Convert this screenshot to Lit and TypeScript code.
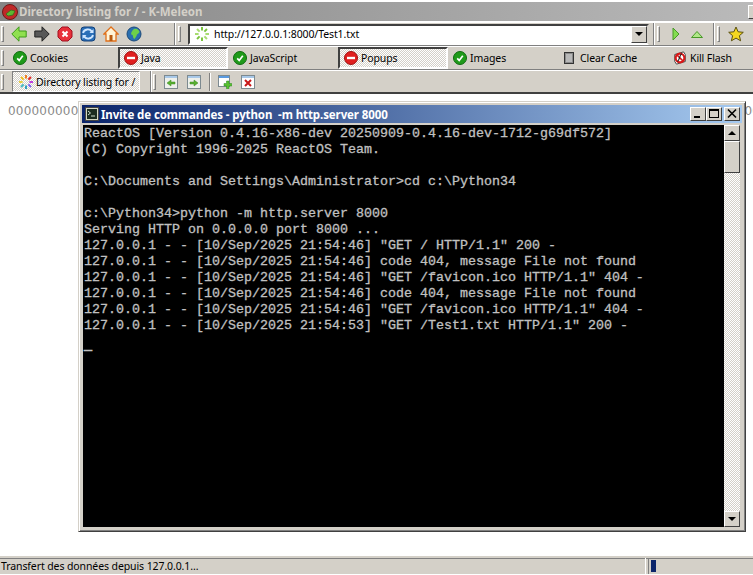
import { LitElement, html, css, svg } from "lit";
import { customElement } from "lit/decorators.js";

const check = svg`<svg class="i14" viewBox="0 0 14 14"><circle cx="7" cy="7" r="6.5" fill="#1f9a1a" stroke="#0f6a10"/><path d="M4.2 7.4l2 2 3.6-4.6" fill="none" stroke="#fff" stroke-width="1.7"/></svg>`;
const block = svg`<svg class="i14" viewBox="0 0 14 14"><circle cx="7" cy="7" r="6.5" fill="#e01f1f" stroke="#a01010"/><rect x="3" y="5.8" width="8" height="2.4" fill="#fff"/></svg>`;
const ticks = (cols: string[]) => cols.map((c, i) => {
  const a = (i * Math.PI) / 4 - Math.PI / 2;
  const x1 = 8 + Math.cos(a) * 3.4, y1 = 8 + Math.sin(a) * 3.4, x2 = 8 + Math.cos(a) * 7, y2 = 8 + Math.sin(a) * 7;
  return svg`<line x1=${x1} y1=${y1} x2=${x2} y2=${y2} stroke=${c} stroke-width="2"/>`;
});

const back = svg`<svg class="i16" viewBox="0 0 16 16"><path d="M.8 8L8 .8v4.200h7.200v6H8v4.200z" fill="#90e050" stroke="#3e9a1c"/></svg>`;
const fwd = svg`<svg class="i16" viewBox="0 0 16 16"><path d="M15.200 8L8 .8v4.200H.8v6H8v4.200z" fill="#585858" stroke="#222"/></svg>`;
const stop = svg`<svg class="i16" viewBox="0 0 16 16"><path d="M5 1h6l4 4v6l-4 4H5l-4-4V5z" fill="#e8303a" stroke="#a01020"/><path d="M5.500 5.500l5 5m0-5l-5 5" stroke="#fff" stroke-width="2"/></svg>`;
const reload = svg`<svg class="i16" viewBox="0 0 16 16"><rect x="1" y="1" width="14" height="14" rx="3" fill="#2a6fb8" stroke="#12417a"/><path d="M3 7c1-4 7-5 9-1M13 9c-1 4-7 5-9 1" fill="none" stroke="#cfe6ff" stroke-width="1.800"/><path d="M13.500 3v4h-4zM2.500 13V9h4z" fill="#cfe6ff"/></svg>`;
const home = svg`<svg class="i16" viewBox="0 0 16 16"><path d="M8 1L1 8h2v7h10V8h2z" fill="#fff4d8" stroke="#e0701a" stroke-width="1.300"/><rect x="6.500" y="9" width="3" height="6" fill="#b85a10"/></svg>`;
const globe = svg`<svg class="i16" viewBox="0 0 16 16"><circle cx="8" cy="8" r="7" fill="#2a6fb0" stroke="#1b4a7a"/><path d="M8 3c3-1 5 1 5.500 3-1 2-3 2-3 4l-2 3c-2-1-1-3-2-4-2 0-2-3 1.500-6z" fill="#6ed04a"/></svg>`;
const tabBack = svg`<svg class="i14" viewBox="0 0 14 14"><rect x=".5" y=".5" width="13" height="13" fill="#eef0ec" stroke="#7d8a90"/><rect x="1" y="1" width="12" height="2" fill="#a8c8e8"/><path d="M3 8l4-3v2h4v2H7v2z" fill="#58b030" stroke="#3a8a20" stroke-width=".5"/></svg>`;
const tabFwd = svg`<svg class="i14" viewBox="0 0 14 14"><rect x=".5" y=".5" width="13" height="13" fill="#eef0ec" stroke="#7d8a90"/><rect x="1" y="1" width="12" height="2" fill="#a8c8e8"/><path d="M11 8L7 5v2H3v2h4v2z" fill="#58b030" stroke="#3a8a20" stroke-width=".5"/></svg>`;
const tabNew = svg`<svg class="i14" viewBox="0 0 14 14"><rect x=".5" y=".5" width="11" height="11" fill="#fff" stroke="#7d8a90"/><rect x="1" y="1" width="10" height="2" fill="#5a9ae0"/><path d="M8.500 6v2.500H6V11h2.500v2.800H11V11h2.800V8.500H11V6z" fill="#58c030" stroke="#2a8a20" stroke-width=".5"/></svg>`;
const tabClose = svg`<svg class="i14" viewBox="0 0 14 14"><rect x=".5" y=".5" width="13" height="13" fill="#fff" stroke="#7d8a90"/><rect x="1" y="1" width="12" height="2" fill="#a8c8e8"/><path d="M4 5l6 6m0-6l-6 6" stroke="#c81818" stroke-width="2"/></svg>`;
const cache = svg`<svg class="i14" viewBox="0 0 14 14"><rect x="1.500" y="1.500" width="9" height="11" fill="#8a8a8a" stroke="#333"/><rect x="3" y="3" width="6" height="8" fill="#b8b8b8"/></svg>`;
const flash = svg`<svg class="i14" viewBox="0 0 16 16"><path d="M2 4l10-3 2 3v8l-10 3-2-3z" fill="#fff" stroke="#333"/><circle cx="8" cy="8" r="5" fill="none" stroke="#d81818" stroke-width="2.500"/><path d="M4 4l8 8" stroke="#d81818" stroke-width="2"/><path d="M10 3C7 5 8 10 5 12" stroke="#222" fill="none" stroke-width="1.300"/></svg>`;
const star = svg`<svg class="i16" viewBox="0 0 16 16"><path d="M8 1l2.100 4.800 5.200.5-3.900 3.400 1.200 5.100L8 12.100l-4.600 2.700 1.200-5.100L.7 6.300l5.200-.5z" fill="#f5d820" stroke="#5a5010"/></svg>`;
const logo = svg`<svg class="i16" viewBox="0 0 16 16"><circle cx="8" cy="8" r="7.500" fill="#c02828" stroke="#701818"/><path d="M4 10l5-4 4 1-2 4-5 1z" fill="#5cb830" stroke="#2a6a18" stroke-width=".7"/></svg>`;
const cmd = svg`<svg class="i14" viewBox="0 0 14 14"><rect x=".5" y=".5" width="13" height="13" fill="#d4d8c4" stroke="#444"/><rect x="2" y="2" width="10" height="10" fill="#1c2c20"/><path d="M3 4l2.500 2L3 8" fill="none" stroke="#d0e0d0"/><path d="M6 9h4" stroke="#d0e0d0"/></svg>`;

const LOG = [
  "ReactOS [Version 0.4.16-x86-dev 20250909-0.4.16-dev-1712-g69df572]",
  "(C) Copyright 1996-2025 ReactOS Team.",
  "",
  "C:\\Documents and Settings\\Administrator>cd c:\\Python34",
  "",
  "c:\\Python34>python -m http.server 8000",
  "Serving HTTP on 0.0.0.0 port 8000 ...",
  '127.0.0.1 - - [10/Sep/2025 21:54:46] "GET / HTTP/1.1" 200 -',
  "127.0.0.1 - - [10/Sep/2025 21:54:46] code 404, message File not found",
  '127.0.0.1 - - [10/Sep/2025 21:54:46] "GET /favicon.ico HTTP/1.1" 404 -',
  "127.0.0.1 - - [10/Sep/2025 21:54:46] code 404, message File not found",
  '127.0.0.1 - - [10/Sep/2025 21:54:46] "GET /favicon.ico HTTP/1.1" 404 -',
  '127.0.0.1 - - [10/Sep/2025 21:54:53] "GET /Test1.txt HTTP/1.1" 200 -',
  "",
].join("\n");

const TOGGLES = [
  { label: "Cookies", icon: check },
  { label: "Java", icon: block, on: true },
  { label: "JavaScript", icon: check },
  { label: "Popups", icon: block, on: true },
  { label: "Images", icon: check },
  { label: "Clear Cache", icon: cache },
  { label: "Kill Flash", icon: flash },
];

@customElement("app-root")
export class AppRoot extends LitElement {
  static styles = css`
    :host {
      display: flex; flex-direction: column; position: relative;
      width: 753px; height: 575px; overflow: hidden; background: #fff;
      font: 10.5px "Noto Sans", sans-serif; letter-spacing: -0.1px; color: #000;
    }
    svg { display: block; flex: none; }
    .i14 { width: 14px; height: 14px; }
    .i16 { width: 16px; height: 16px; }
    .titlebar {
      height: 19px; flex: none; margin-top: 2px; padding-left: 2px;
      display: flex; align-items: center; gap: 1px; overflow: hidden;
      background: linear-gradient(90deg, #858585, #bababa);
      border-bottom: 1px solid #fff;
      font-weight: 700; color: #d4d0c8; font-size: 11.5px; letter-spacing: 0;
    }
    .titlebar .t { flex: 1; }
    .edgebtn { width: 16px; height: 14px; margin-right: -11px; background: #d4d0c8; border: 1px solid; border-color: #fff #404040 #404040 #fff; box-sizing: border-box; }
    .row {
      flex: none; display: flex; align-items: center; background: #d4d0c8;
      border-top: 1px solid #fff; border-bottom: 1px solid #808080; box-sizing: border-box;
    }
    .r1 { height: 24px; }
    .r2 { height: 24px; }
    .r3 { height: 24px; border-bottom: 2px solid #404040; }
    .grip { width: 3px; height: 16px; flex: none; margin-left: 1px; background: #d4d0c8; border: 1px solid; border-color: #fff #808080 #808080 #fff; box-sizing: border-box; }
    .vsep { width: 2px; align-self: stretch; flex: none; background: linear-gradient(90deg, #808080 50%, #fff 50%); }
    .nav { display: flex; gap: 7px; width: 156px; padding-left: 7px; box-sizing: border-box; align-items: center; }
    .urlwrap { width: 461px; height: 21px; margin-left: 7px; box-sizing: border-box; border: 2px solid; border-color: #404040 #d4d0c8 #fff #404040; background: #fff; display: flex; align-items: center; padding-left: 4px; gap: 4px; }
    .url { flex: 1; }
    .drop { width: 16px; height: 17px; background: #d4d0c8; border: 1px solid; border-color: #fff #404040 #404040 #fff; box-sizing: border-box; display: flex; align-items: center; justify-content: center; }
    .drop::after, .sb-down::after { content: ""; border: 4px solid transparent; border-top: 4px solid #000; border-bottom: 0; }
    .sb-up::after { content: ""; border: 4px solid transparent; border-bottom: 4px solid #000; border-top: 0; }
    .spacer { flex: 1; }
    .toggles { display: grid; grid-template-columns: repeat(6, 110px) 85px; margin-left: 4px; align-self: stretch; }
    .tg { display: flex; align-items: center; gap: 3px; padding-left: 5px; box-sizing: border-box; }
    .tg.on { border: 2px solid; border-color: #404040 #fff #fff #404040; padding-left: 4px; background: repeating-conic-gradient(#fff 0 25%, #d4d0c8 0 50%) 0 0 / 2px 2px; }
    .tabbtn { width: 128px; height: 21px; margin-left: 8px; box-sizing: border-box; border: 1px solid; border-color: #808080 #fff #fff #808080; background: repeating-conic-gradient(#fff 0 25%, #d4d0c8 0 50%) 0 0 / 2px 2px; display: flex; align-items: center; padding-left: 5px; gap: 2px; white-space: nowrap; }
    .tabtools { display: flex; align-items: center; margin-left: 8px; }
    .content { flex: 1; position: relative; padding: 10px 0 0 8px; overflow: hidden; white-space: nowrap; font: 12px "DejaVu Sans", sans-serif; color: #8a8a8a; letter-spacing: .2px; line-height: 14px; }
    .status { flex: none; height: 19px; box-sizing: border-box; display: flex; background: #d4d0c8; border-top: 2px solid #d4d0c8; border-bottom: 1px solid #fff; box-shadow: inset 0 1px #808080; }
    .status .s1 { width: 646px; padding-left: 1px; box-sizing: border-box; line-height: 17px; border-right: 1px solid #fff; }
    .status .s2 { flex: 1; margin-left: 2px; padding: 2px 0 0 2px; border-left: 1px solid #808080; }
    .prog { width: 5px; height: 12px; background: #0a246a; }
    .win { position: absolute; left: 78px; top: 101px; width: 668px; height: 431px; box-sizing: border-box; background: #d4d0c8; border: 1px solid; border-color: #d4d0c8 #404040 #404040 #d4d0c8; box-shadow: inset 1px 1px #fff, inset -1px -1px #808080; padding: 3px 3px 4px 3px; display: flex; flex-direction: column; }
    .wtitle { height: 18px; flex: none; display: flex; align-items: center; padding: 0 2px 0 3px; gap: 2px; background: linear-gradient(90deg, #0a246a, #a6caf0); color: #fff; font-weight: 700; font-size: 11.5px; letter-spacing: -0.1px; white-space: pre; }
    .wtitle .t { flex: 1; }
    .wb { width: 16px; height: 14px; background: #d4d0c8; box-sizing: border-box; border: 1px solid; border-color: #fff #404040 #404040 #fff; display: flex; align-items: center; justify-content: center; }
    .wb svg { width: 14px; height: 12px; }
    .wb.last { margin-left: 2px; }
    .wbody { flex: 1; display: flex; margin-top: 2px; min-height: 0; }
    .term { flex: 1; background: #000; margin-left: 1px; padding: 1px 0 0 1px; color: #c0c0c0; font: 13.33px/16px "Liberation Mono", monospace; letter-spacing: 0; white-space: pre; overflow: hidden; -webkit-text-stroke: .3px #c0c0c0; }
    .cur { font-weight: 700; vertical-align: -4px; line-height: 0; -webkit-text-stroke: .8px #c0c0c0; }
    .sb { width: 16px; flex: none; margin-right: 2px; display: flex; flex-direction: column; background: repeating-conic-gradient(#fff 0 25%, #d4d0c8 0 50%) 0 0 / 2px 2px; }
    .sbb { height: 16px; flex: none; background: #d4d0c8; border: 1px solid; border-color: #fff #404040 #404040 #fff; box-sizing: border-box; display: flex; align-items: center; justify-content: center; }
    .thumb { height: 32px; flex: none; background: #d4d0c8; border: 1px solid; border-color: #fff #404040 #404040 #fff; box-sizing: border-box; }
  `;

  render() {
    return html`
      <div class="titlebar">${logo}<span class="t">Directory listing for / - K-Meleon</span><span class="edgebtn"></span></div>
      <div class="row r1">
        <span class="grip"></span>
        <div class="nav">${back}${fwd}${stop}${reload}${home}${globe}</div>
        <span class="vsep" style="margin-left:14px"></span>
        <span class="grip" style="margin-left:2px"></span>
        <div class="urlwrap">
          <svg class="i16" viewBox="0 0 16 16">${ticks(["#7cc440","#7cc440","#a8dc70","#a8dc70","#7cc440","#7cc440","#a8dc70","#a8dc70"])}</svg>
          <span class="url">http://127.0.0.1:8000/Test1.txt</span>
          <span class="drop"></span>
        </div>
        <span class="vsep" style="margin-left:4px"></span>
        <span class="grip" style="margin-left:2px"></span>
        <svg class="i14" viewBox="0 0 14 14" style="margin-left:10px"><path d="M3 1l6 6-6 6z" fill="#84dc50" stroke="#489828"/></svg>
        <svg class="i14" viewBox="0 0 14 14" style="margin-left:6px"><path d="M1.500 10.500L7 4.500l5.500 6z" fill="#b0e888" stroke="#489828"/></svg>
        <span class="vsep" style="margin-left:9px"></span>
        <span class="grip" style="margin-left:2px"></span>
        <span style="margin-left:8px">${star}</span>
      </div>
      <div class="row r2">
        <span class="grip"></span>
        <div class="toggles">
          ${TOGGLES.map((t) => html`<div class="tg ${t.on ? "on" : ""}">${t.icon}<span>${t.label}</span></div>`)}
        </div>
      </div>
      <div class="row r3">
        <span class="grip"></span>
        <div class="tabbtn">
          <svg class="i16" viewBox="0 0 16 16">${ticks(["#f08020","#e02020","#c040e0","#8060f0","#30a0c0","#40b8c0","#e8d040","#f0c020"])}</svg>
          <span>Directory listing for /</span>
        </div>
        <span class="vsep" style="margin-left:10px"></span>
        <span class="grip" style="margin-left:1px"></span>
        <div class="tabtools">
          ${tabBack}<span style="width:9px"></span>${tabFwd}
          <span style="width:8px"></span><span class="vsep" style="height:18px;align-self:center"></span><span style="width:7px"></span>
          ${tabNew}<span style="width:9px"></span>${tabClose}
        </div>
      </div>
      <div class="content">0000000000000000000000000000000000000000000000000000000000000000000000000000000000000000000000000000000</div>
      <div class="status">
        <div class="s1">Transfert des données depuis 127.0.0.1...</div>
        <div class="s2"><div class="prog"></div></div>
      </div>
      <div class="win">
        <div class="wtitle">
          ${cmd}<span class="t">Invite de commandes - python  -m http.server 8000</span>
          <span style="display:flex">
            <span class="wb"><svg viewBox="0 0 14 12"><rect x="3" y="8" width="6" height="2"/></svg></span>
            <span class="wb"><svg viewBox="0 0 14 12"><path d="M2 1h10v9H2zM3 3v6h8V3z" fill-rule="evenodd"/></svg></span>
            <span class="wb last"><svg viewBox="0 0 14 12"><path d="M3 1.500l8 8m0-8l-8 8" stroke="#000" stroke-width="1.600"/></svg></span>
          </span>
        </div>
        <div class="wbody">
          <div class="term">${LOG}<span class="cur">_</span></div>
          <div class="sb">
            <div class="sbb sb-up"></div>
            <div class="thumb"></div>
            <div class="spacer"></div>
            <div class="sbb sb-down"></div>
          </div>
        </div>
      </div>
    `;
  }
}
